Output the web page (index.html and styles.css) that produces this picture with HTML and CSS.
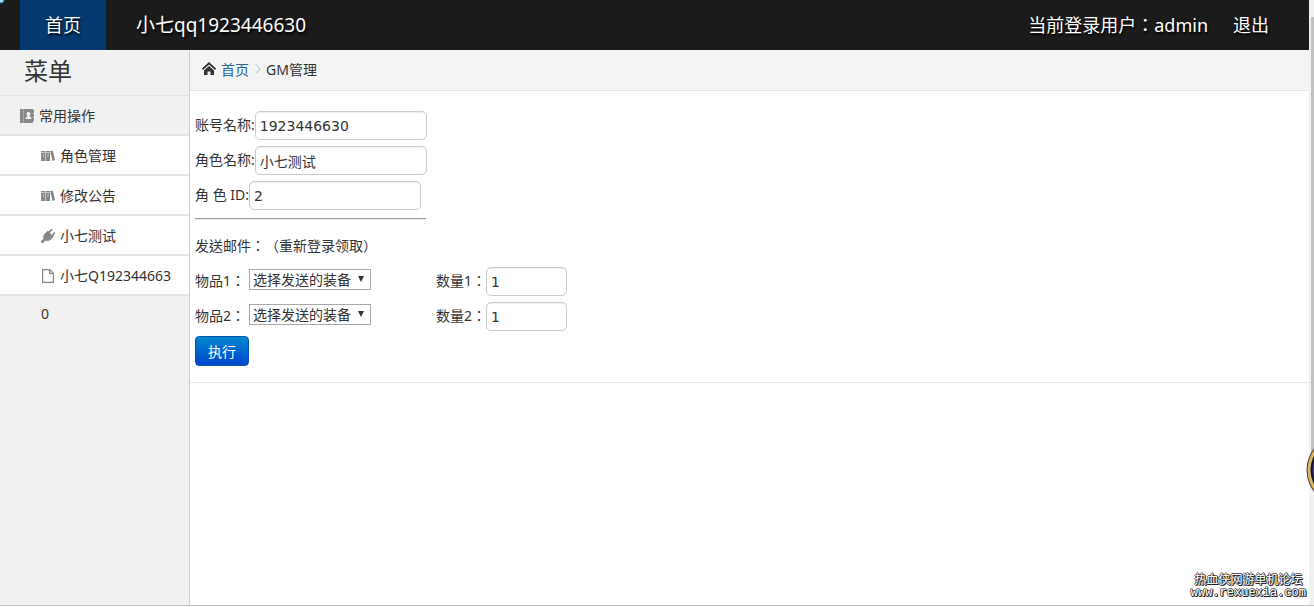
FILE: index.html
```html
<!DOCTYPE html>
<html lang="zh-CN">
<head>
  <meta charset="UTF-8">
  <title>GM管理</title>
  <link rel="stylesheet" href="styles.css">
</head>
<body>

  <svg class="sprite" width="0" height="0" aria-hidden="true">
    <symbol id="icon-book" viewBox="0 0 14 14">
      <path fill="#888" d="M0 0h3v14H0z"/>
      <path fill="#aaa" d="M3 0h1v14H3z"/>
      <path fill="#888" fill-rule="evenodd" d="M4 0h9v1h1v3h-1v1h1v3h-1v1h1v3h-1v2H4zM8.500 3a2 2 0 0 0-1.200 3.600c.2.400 0 .900-.5 1.100C5.800 8 5.500 8.600 5.500 10h6c0-1.400-.3-2-1.300-2.300-.5-.2-.7-.7-.5-1.100A2 2 0 0 0 8.500 3z"/>
    </symbol>
    <symbol id="icon-library" viewBox="0 0 14 14">
      <path fill="#888" d="M0 2h4.500v10H0zM5 2h4v10H5zM9.200 2.300l2.600-.8L14 11l-2.500 1z"/>
      <path fill="#c4c4c4" d="M0 3h4.500v1H0zM5 3h4v1H5zM1.800 5h1v3h-1zM6.500 5h1v3h-1z"/>
    </symbol>
    <symbol id="icon-plug" viewBox="0 0 14 14">
      <path fill="#888" d="M4.500 4l6 6c-2 2-4.300 2.300-6 1.400L2 14l-1.700-.3L0 12l2.600-2.500C1.700 7.500 2.500 5.500 4.500 4zM5.800 2.800l1-1 6 6-1 1zM4.200 4.300l2-2 6 6-2 2z"/>
      <path stroke="#888" stroke-width="1.700" stroke-linecap="round" d="M7.500 3.500L10.500.8M11 7l2.500-3"/>
    </symbol>
    <symbol id="icon-file" viewBox="0 0 14 14">
      <path fill="none" stroke="#888" stroke-width="1.200" d="M1.600.6h7.200l3.600 3.600v9.200H1.600zM8.600.6v3.800h3.800"/>
    </symbol>
    <symbol id="icon-home" viewBox="0 0 14 14">
      <path fill="none" stroke="#333" stroke-width="1.900" d="M.4 7.300L7 1.300l6.600 6"/>
      <path fill="#333" d="M7 4l5 4.500V13H8.500V9.500h-3V13H2V8.500z"/>
    </symbol>
  </svg>

  <div class="page">
    <header class="topbar">
      <nav class="nav">
        <a href="#" class="nav-home">首页</a>
        <a href="#" class="nav-brand">小七qq1923446630</a>
      </nav>
      <div class="user">
        <span>当前登录用户：admin</span>
        <a href="#">退出</a>
      </div>
    </header>

    <div class="main">
      <aside class="sidebar">
        <h1>菜单</h1>
        <h2><svg class="icon"><use href="#icon-book"/></svg>常用操作</h2>
        <ul>
          <li><a href="#"><svg class="icon"><use href="#icon-library"/></svg>角色管理</a></li>
          <li><a href="#"><svg class="icon"><use href="#icon-library"/></svg>修改公告</a></li>
          <li><a href="#"><svg class="icon"><use href="#icon-plug"/></svg>小七测试</a></li>
          <li><a href="#"><svg class="icon"><use href="#icon-file"/></svg>小七Q1923446630</a></li>
        </ul>
      </aside>

      <main class="content">
        <div class="crumb">
          <svg class="icon"><use href="#icon-home"/></svg><a href="#">首页</a>
          <svg class="arrow" viewBox="0 0 6 10"><path d="M1 .5L5 5 1 9.500"/></svg>
          <span>GM管理</span>
        </div>

        <form class="gm-form">
          <div class="row">
            <label for="account">账号名称:</label>
            <input type="text" id="account" value="1923446630">
          </div>
          <div class="row">
            <label for="role">角色名称:</label>
            <input type="text" id="role" value="小七测试">
          </div>
          <div class="row">
            <label for="roleId">角 色 ID:</label>
            <input type="text" id="roleId" value="2">
          </div>
          <hr>
          <div class="row">
            <span class="tip">发送邮件：（重新登录领取）</span>
          </div>
          <div class="row">
            <div class="item">
              <label for="item1">物品1：</label>
              <span class="select">
                <select id="item1"><option>选择发送的装备</option></select>
              </span>
            </div>
            <label for="num1">数量1：</label>
            <input type="text" id="num1" class="num" value="1">
          </div>
          <div class="row">
            <div class="item">
              <label for="item2">物品2：</label>
              <span class="select">
                <select id="item2"><option>选择发送的装备</option></select>
              </span>
            </div>
            <label for="num2">数量2：</label>
            <input type="text" id="num2" class="num" value="1">
          </div>
          <button type="button">执行</button>
        </form>
      </main>
    </div>
  </div>

  <div class="scroll"><div class="thumb"></div></div>

  <svg class="dot" viewBox="0 0 6 4"><circle cx="1" cy="0" r="3"/></svg>
  <svg class="orb" viewBox="0 0 8 60">
    <circle cx="35.500" cy="30" r="35" fill="#4a4030"/>
    <circle cx="35.500" cy="30" r="34" fill="#d9b566"/>
    <circle cx="35.500" cy="30" r="31" fill="#15101c"/>
    <circle cx="35.500" cy="30" r="29" fill="#4a35a0"/>
  </svg>
  <div class="watermark">热血侠网游单机论坛<br><span>www.rexuexia.com</span></div>

</body>
</html>
```

FILE: styles.css
```css
* {
  box-sizing: border-box;
}

body {
  margin: 0;
  display: flex;
  min-height: 100vh;
  position: relative;
  overflow: hidden;
  border-bottom: 1px solid #fff;
  font-family: "Noto Sans", "Noto Sans CJK SC", sans-serif;
  font-size: 14px;
  color: #333;
}

a {
  color: inherit;
  text-decoration: none;
}

.sprite {
  position: absolute;
}

.icon {
  width: 14px;
  height: 14px;
  margin-right: 5px;
  vertical-align: -2px;
}

.page {
  flex: 1;
  display: flex;
  flex-direction: column;
  border-bottom: 1px solid #c0c0c0;
}

/* top bar */
.topbar {
  display: flex;
  justify-content: space-between;
  height: 50px;
  padding: 0 40px 0 20px;
  background: #1b1b1b;
  color: #fff;
  font-size: 18px;
  line-height: 50px;
  text-shadow: 1px 2px 2px #000;
}

.nav, .user {
  display: flex;
}

.nav-home {
  padding: 0 25px;
  background: #043a70;
}

.nav-brand {
  padding: 0 30px;
  font-size: 19px;
}

.user {
  gap: 25px;
}

/* centred full-width punctuation */
.user span, label, .tip {
  font-family: "Noto Sans", "Noto Sans CJK TC", sans-serif;
  font-feature-settings: "locl" 0;
  text-spacing-trim: space-all;
}

.main {
  flex: 1;
  display: flex;
}

/* left menu */
.sidebar {
  width: 190px;
  background: #f1f1f1;
  border-right: 1px solid #ccc;
}

.sidebar h1 {
  margin: 0;
  height: 46px;
  padding-left: 24px;
  border-bottom: 1px solid #e4e4e4;
  font-size: 24px;
  font-weight: normal;
  line-height: 42px;
}

.sidebar h2 {
  margin: 0;
  height: 40px;
  padding-left: 20px;
  border-bottom: 2px solid #e4e4e4;
  font-size: 14px;
  font-weight: normal;
  line-height: 40px;
}

.sidebar ul {
  margin: 0;
  padding: 0;
  list-style: none;
}

.sidebar li {
  height: 40px;
  padding: 1px 15px 0 41px;
  background: #fff;
  border-bottom: 2px solid #e4e4e4;
  line-height: 38px;
  word-break: break-all;
}

/* right side */
.content {
  flex: 1;
  background: #fff;
}

.crumb {
  display: flex;
  align-items: center;
  height: 41px;
  padding: 0 0 2px 12px;
  background: #f4f4f4;
  border-bottom: 1px solid #e4e4e4;
}

.crumb a {
  color: #2a6496;
}

.arrow {
  width: 6px;
  height: 10px;
  margin: 0 5px 0 6px;
  fill: none;
  stroke: #a9bdd6;
}

.gm-form {
  padding: 17px 5px 16px;
  border-bottom: 1px solid #e4e4e4;
}

.row {
  display: flex;
  align-items: center;
  height: 35px;
}

.row label, .tip {
  padding-bottom: 4px;
}

.row input {
  width: 172px;
  height: 29px;
  padding: 0 4px;
  border: 1px solid #ccc;
  border-radius: 5px;
  box-shadow: inset 0 1px 1px #eee;
  font-family: "DejaVu Sans", "Noto Sans CJK SC", sans-serif;
  font-size: 14px;
  color: #333;
}

.row .num {
  width: 81px;
}

hr {
  width: 231px;
  height: 2px;
  margin: 5px 0 9px;
  border: 0;
  border-top: 1px solid #999;
  border-bottom: 1px solid #eee;
}

.item {
  display: flex;
  align-items: center;
  gap: 4px;
  width: 241px;
}

.select {
  position: relative;
  display: flex;
  margin-bottom: 4px;
}

.select select {
  width: 122px;
  height: 21px;
  padding: 0 3px;
  border: 1px solid #a9a9a9;
  border-radius: 0;
  background: #fff;
  appearance: none;
  font-family: inherit;
  font-size: 14px;
  line-height: 19px;
  color: #333;
}

.select::after {
  content: "";
  position: absolute;
  top: 7px;
  right: 7px;
  border: 3px solid transparent;
  border-top: 6px solid #333;
  border-bottom: 0;
  pointer-events: none;
}

button {
  display: block;
  width: 54px;
  height: 30px;
  margin-top: 2px;
  padding: 0;
  border: 1px solid #0055b3;
  border-radius: 4px;
  background: linear-gradient(#0088cc, #0044cc);
  color: #fff;
  font-family: inherit;
  font-size: 14px;
}

/* scrollbar strip and things floating over the page */
.scroll {
  width: 5px;
  padding: 17px 0 0 2px;
  background: #f1f1f1;
  border-bottom: 1px solid #c0c0c0;
}

.thumb {
  height: 75%;
  background: #c1c1c1;
}

.dot {
  position: absolute;
  top: 0;
  left: 0;
  width: 6px;
  height: 4px;
  fill: #a8d8f8;
  stroke: #2a7ab8;
}

.orb {
  position: absolute;
  right: 0;
  bottom: 106px;
  width: 8px;
  height: 60px;
}

.watermark {
  position: absolute;
  right: 8px;
  bottom: 7px;
  color: #fff;
  font-size: 12px;
  line-height: 12px;
  text-align: center;
  text-shadow: 1px 1px 0 #222, -1px 0 0 #555, 0 -1px 0 #555, 1px 0 0 #222, 0 1px 0 #222;
}

.watermark span {
  font-family: "Liberation Mono", monospace;
}
```
